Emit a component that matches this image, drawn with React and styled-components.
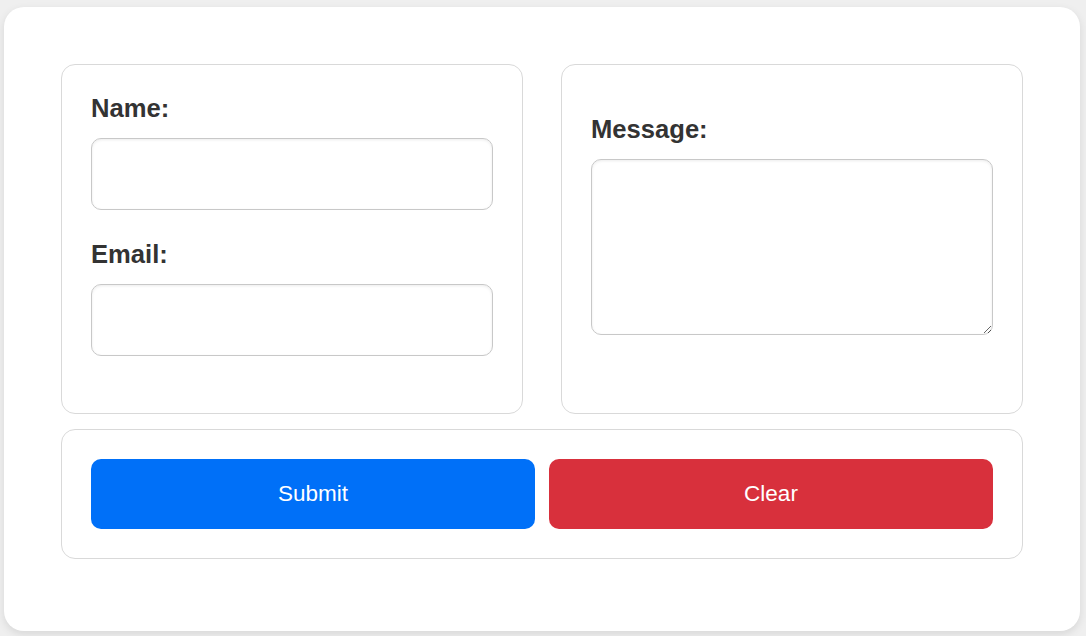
import React from "react";
import styled, { createGlobalStyle } from "styled-components";

const Global = createGlobalStyle`
  html, body { margin: 0; padding: 0; background: #efefef; }
  body { font-family: "Liberation Sans", Arial, Helvetica, sans-serif; }
  * { box-sizing: border-box; }
`;

const Page = styled.div`
  padding: 7px 6px 5px 4px;
`;

const Card = styled.form`
  background: #fff;
  border-radius: 20px;
  box-shadow: 0 3px 8px rgba(0, 0, 0, 0.1);
  padding: 57px 57px 72px 57px;
  display: grid;
  grid-template-columns: 1fr 1fr;
  column-gap: 38px;
  row-gap: 15px;
`;

const Panel = styled.div`
  border: 1px solid #d9d9d9;
  border-radius: 14px;
  padding: ${(p) => (p.$wide ? "29px" : "28px 29px")};
  display: flex;
  flex-direction: column;
  justify-content: ${(p) => (p.$center ? "center" : "flex-start")};
  grid-column: ${(p) => (p.$wide ? "1 / -1" : "auto")};
  height: ${(p) => (p.$wide ? "auto" : "350px")};
`;

const Label = styled.label`
  display: block;
  font-size: 25.6px;
  line-height: 30px;
  font-weight: 700;
  color: #333;
  margin-bottom: 15px;
`;

const Input = styled.input`
  display: block;
  width: 100%;
  height: 72px;
  border: 1px solid #c8c8c8;
  border-radius: 10px;
  box-shadow: inset 0 1px 3px rgba(0, 0, 0, 0.08);
  margin-bottom: 29px;
  font-size: 18px;
  padding: 0 12px;
  font-family: inherit;
`;

const TextArea = styled.textarea`
  display: block;
  width: 100%;
  height: 176px;
  border: 1px solid #c8c8c8;
  border-radius: 10px;
  box-shadow: inset 0 1px 3px rgba(0, 0, 0, 0.08);
  margin-bottom: 30px;
  font-size: 18px;
  padding: 12px;
  font-family: inherit;
`;

const ButtonRow = styled.div`
  display: flex;
  gap: 14px;
`;

const Button = styled.button`
  flex: 1;
  height: 70px;
  border: none;
  border-radius: 10px;
  background: ${(p) => p.$bg};
  color: #fff;
  font-family: "Liberation Sans", Arial, sans-serif;
  font-size: 22.5px;
  cursor: pointer;
`;

export default function App() {
  return (
    <>
      <Global />
      <Page>
        <Card onSubmit={(e) => e.preventDefault()}>
          <Panel>
            <Label htmlFor="name">Name:</Label>
            <Input id="name" type="text" />
            <Label htmlFor="email">Email:</Label>
            <Input id="email" type="email" />
          </Panel>
          <Panel $center>
            <Label htmlFor="message">Message:</Label>
            <TextArea id="message" />
          </Panel>
          <Panel $wide>
            <ButtonRow>
              <Button type="submit" $bg="#0070f8">Submit</Button>
              <Button type="reset" $bg="#d8303c">Clear</Button>
            </ButtonRow>
          </Panel>
        </Card>
      </Page>
    </>
  );
}
